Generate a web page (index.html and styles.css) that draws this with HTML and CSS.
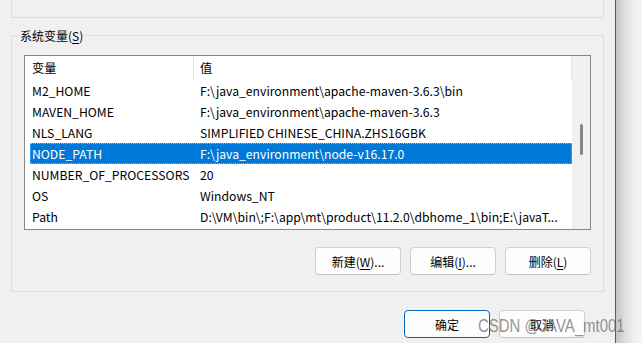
FILE: index.html
```html
<!DOCTYPE html>
<html lang="zh-CN">
<head>
<meta charset="utf-8">
<title>环境变量</title>
<link rel="stylesheet" href="styles.css">
</head>
<body>
<div class="screen">
  <div class="window">
    <div class="group-top"></div>
    <div class="group">
      <div class="legend">系统变量(<u>S</u>)</div>
      <div class="list">
        <div class="list-main">
          <div class="row head"><div class="c1">变量</div><div class="c2">值</div></div>
          <div class="row"><div class="c1">M2_HOME</div><div class="c2">F:\java_environment\apache-maven-3.6.3\bin</div></div>
          <div class="row"><div class="c1">MAVEN_HOME</div><div class="c2">F:\java_environment\apache-maven-3.6.3</div></div>
          <div class="row"><div class="c1">NLS_LANG</div><div class="c2">SIMPLIFIED CHINESE_CHINA.ZHS16GBK</div></div>
          <div class="row selected"><div class="c1">NODE_PATH</div><div class="c2">F:\java_environment\node-v16.17.0</div></div>
          <div class="row"><div class="c1">NUMBER_OF_PROCESSORS</div><div class="c2">20</div></div>
          <div class="row"><div class="c1">OS</div><div class="c2">Windows_NT</div></div>
          <div class="row"><div class="c1">Path</div><div class="c2">D:\VM\bin\;F:\app\mt\product\11.2.0\dbhome_1\bin;E:\javaT...</div></div>
        </div>
        <div class="scrollbar"><div class="thumb"></div></div>
      </div>
      <div class="btns">
        <button class="btn">新建(<u>W</u>)...</button>
        <button class="btn">编辑(<u>I</u>)...</button>
        <button class="btn">删除(<u>L</u>)</button>
      </div>
    </div>
    <div class="footer">
      <button class="btn primary">确定</button>
      <button class="btn">取消</button>
    </div>
  </div>
  <div class="shadow"></div>
  <div class="watermark">CSDN @JAVA_mt001</div>
</div>
</body>
</html>
```

FILE: styles.css
```css
* { box-sizing: border-box; }
html, body { margin: 0; padding: 0; }
body {
  width: 642px;
  height: 343px;
  overflow: hidden;
  background: #f0f0f0;
  font-family: "Noto Sans CJK SC", "Noto Sans", sans-serif;
  font-size: 12px;
  color: #000;
}
.screen {
  position: relative;
  display: flex;
  width: 642px;
  height: 343px;
}
.window {
  width: 616px;
  height: 343px;
  padding-left: 11px;
  background: #f0f0f0;
  border-right: 1px solid #5c5c5c;
}
.shadow {
  flex: 1;
  background: linear-gradient(to right, #c4c4c4 0%, #e2e2e2 40%, #f1f1f1 75%, #f5f5f5 100%);
}
.group-top {
  width: 593px;
  height: 18px;
  border: 1px solid #dcdcdc;
  border-top: none;
}
.group {
  position: relative;
  width: 593px;
  margin-top: 17px;
  border: 1px solid #dcdcdc;
  padding: 19px 12px 16px 12px;
}
.legend {
  position: absolute;
  left: 7px;
  top: -9px;
  height: 17px;
  line-height: 17px;
  padding: 0 1px;
  background: #f0f0f0;
}
u { text-underline-offset: 2px; }
.list {
  display: flex;
  width: 567px;
  height: 175px;
  border: 1px solid #828790;
  background: #fff;
}
.list-main {
  width: 547px;
  padding-left: 5px;
}
.row {
  display: flex;
  height: 21px;
  line-height: 22px;
  white-space: nowrap;
  font-size: 12.2px;
}
.row.head {
  height: 24px;
  line-height: 24px;
}
.c1 {
  width: 163px;
  padding-left: 2px;
  margin-right: 1px;
}
.c2 {
  flex: 1;
  padding-left: 6px;
}
.head .c1 {
  margin-right: 0;
  width: 164px;
  border-right: 1px solid #e5e5e5;
}
.head .c2 {
  border-right: 1px solid #e5e5e5;
}
.row.selected {
  background: #0078d7;
  color: #fff;
  outline: 1px dotted #f0a050;
  outline-offset: -1px;
}
.scrollbar {
  width: 18px;
  background: #f0f0f0;
  padding-top: 68px;
  padding-left: 8px;
}
.thumb {
  width: 3px;
  height: 31px;
  border-radius: 2px;
  background: #858585;
}
.btns {
  display: flex;
  justify-content: flex-end;
  gap: 9px;
  margin-top: 17px;
}
.btn {
  width: 86px;
  height: 28px;
  padding: 0;
  font-family: inherit;
  font-size: 12px;
  color: #000;
  background: #fdfdfd;
  border: 1px solid #d0d0d0;
  border-bottom-color: #c2c2c2;
  border-radius: 4px;
}
.btn.primary {
  border: 1px solid #0067c0;
}
.footer {
  display: flex;
  justify-content: flex-end;
  gap: 9px;
  margin-top: 18px;
  padding-right: 30px;
}
.watermark {
  position: absolute;
  left: 478px;
  top: 315px;
  font-family: "Liberation Sans", Arial, sans-serif;
  font-size: 18px;
  line-height: 22px;
  color: rgba(100, 100, 100, 0.7);
  white-space: nowrap;
  transform: scaleX(0.83);
  transform-origin: left top;
}
```
